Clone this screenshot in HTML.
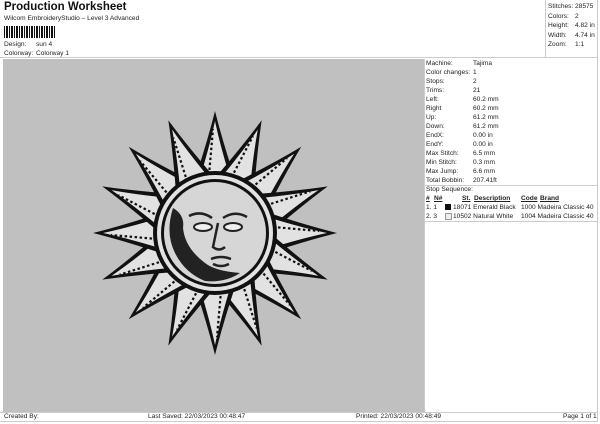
<!DOCTYPE html>
<html><head><style>
body{margin:0;width:600px;height:424px;background:#fff;font-family:"Liberation Sans",sans-serif;color:#222;position:relative;overflow:hidden;font-size:6.6px}
.a{position:absolute;white-space:nowrap}
</style></head><body>
<div class="a" style="left:4px;top:1px;font-size:11.5px;font-weight:bold;color:#111">Production Worksheet</div>
<div class="a" style="left:4px;top:15px">Wilcom EmbroideryStudio – Level 3 Advanced</div>
<div class="a" style="left:4px;top:26px;width:51px;height:12px;background:repeating-linear-gradient(90deg,#111 0 1px,#fff 1px 2px,#111 2px 4px,#fff 4px 5px)"></div>
<div class="a" style="left:4px;top:41px">Design:</div><div class="a" style="left:36px;top:41px">sun 4</div>
<div class="a" style="left:4px;top:50px">Colorway:</div><div class="a" style="left:36px;top:50px">Colorway 1</div>
<div class="a" style="left:0;top:0;width:598px;height:58px;border:1px solid #ccc;box-sizing:border-box;border-top:none;border-left:none"></div>
<div class="a" style="left:545px;top:0;width:1px;height:58px;background:#ccc"></div>
<div class="a" style="left:548px;top:2px;line-height:9.6px">Stitches:<br>Colors:<br>Height:<br>Width:<br>Zoom:</div>
<div class="a" style="left:575px;top:2px;line-height:9.6px">28575<br>2<br>4.82 in<br>4.74 in<br>1:1</div>
<div class="a" style="left:3px;top:59px;width:421px;height:353px;background:#c0c0c0"></div>
<svg class="a" style="left:3px;top:59px" width="421" height="353">
<g transform="translate(212,174)">
<g id="r">
<path d="M-22,-48 Q-8,-90 0,-122 Q8,-90 22,-48Z" fill="#111"/>
<path d="M-16,-52 Q-5,-88 0,-112 Q5,-88 16,-52Z" fill="#e2e2e2"/>
<path d="M-6,-58 L-2,-104" stroke="#111" stroke-width="2.2" stroke-dasharray="2.5,2.5"/>
</g>
<use href="#r" transform="rotate(22.5)"/><use href="#r" transform="rotate(45)"/><use href="#r" transform="rotate(67.5)"/>
<use href="#r" transform="rotate(90)"/><use href="#r" transform="rotate(112.5)"/><use href="#r" transform="rotate(135)"/>
<use href="#r" transform="rotate(157.5)"/><use href="#r" transform="rotate(180)"/><use href="#r" transform="rotate(202.5)"/>
<use href="#r" transform="rotate(225)"/><use href="#r" transform="rotate(247.5)"/><use href="#r" transform="rotate(270)"/>
<use href="#r" transform="rotate(292.5)"/><use href="#r" transform="rotate(315)"/><use href="#r" transform="rotate(337.5)"/>
<circle r="62" fill="#111"/><circle r="58" fill="#e2e2e2"/><circle r="54" fill="#111"/><circle r="51" fill="#d6d6d6"/>
<path d="M-42,-25 Q-50,0 -40,20 Q-30,40 -10,48 Q10,50 25,40 Q0,38 -10,30 Q-30,15 -32,-5 Q-30,-18 -42,-25Z" fill="#222"/>
<ellipse cx="-12" cy="-6" rx="9" ry="4" fill="#f0f0f0" stroke="#222" stroke-width="2"/>
<ellipse cx="18" cy="-6" rx="9" ry="4" fill="#f0f0f0" stroke="#222" stroke-width="2"/>
<path d="M-26,-17 Q-14,-23 -3,-15 M8,-15 Q20,-23 32,-16 M3,-10 L-2,14 Q4,19 10,14 M-4,26 Q6,22 16,26 M-2,31 Q6,35 14,31" stroke="#222" stroke-width="2.5" fill="none"/>
</g></svg>
<div class="a" style="left:424px;top:59px;width:1px;height:353px;background:#ccc"></div>
<div class="a" style="left:426px;top:59px;line-height:9px">Machine:<br>Color changes:<br>Stops:<br>Trims:<br>Left:<br>Right<br>Up:<br>Down:<br>EndX:<br>EndY:<br>Max Stitch:<br>Min Stitch:<br>Max Jump:<br>Total Bobbin:</div>
<div class="a" style="left:473px;top:59px;line-height:9px">Tajima<br>1<br>2<br>21<br>60.2 mm<br>60.2 mm<br>61.2 mm<br>61.2 mm<br>0.00 in<br>0.00 in<br>6.5 mm<br>0.3 mm<br>6.6 mm<br>207.41ft</div>
<div class="a" style="left:425px;top:185px;width:173px;height:1px;background:#ccc"></div>
<div class="a" style="left:426px;top:186px">Stop Sequence:</div>
<div class="a" style="left:426px;top:195px;text-decoration:underline;font-weight:bold">#</div>
<div class="a" style="left:434px;top:195px;text-decoration:underline;font-weight:bold">N#</div>
<div class="a" style="left:462px;top:195px;text-decoration:underline;font-weight:bold">St.</div>
<div class="a" style="left:474px;top:195px;text-decoration:underline;font-weight:bold">Description</div>
<div class="a" style="left:521px;top:195px;text-decoration:underline;font-weight:bold">Code</div>
<div class="a" style="left:540px;top:195px;text-decoration:underline;font-weight:bold">Brand</div>
<div class="a" style="left:426px;top:203px;line-height:9px">1. 1<br>2. 3</div>
<div class="a" style="left:445px;top:204px;width:6px;height:6px;background:#111"></div>
<div class="a" style="left:445px;top:213px;width:5px;height:5px;border:1px solid #999;background:#eee"></div>
<div class="a" style="left:453px;top:203px;line-height:9px">18071 Emerald Black<br>10502 Natural White</div>
<div class="a" style="left:521px;top:203px;line-height:9px">1000 Madeira Classic 40<br>1004 Madeira Classic 40</div>
<div class="a" style="left:425px;top:221px;width:173px;height:1px;background:#ccc"></div>
<div class="a" style="left:0;top:412px;width:598px;height:1px;background:#ccc"></div>
<div class="a" style="left:597px;top:58px;width:1px;height:364px;background:#ccc"></div>
<div class="a" style="left:0;top:421px;width:598px;height:1px;background:#ccc"></div>
<div class="a" style="left:4px;top:413px">Created By:</div>
<div class="a" style="left:148px;top:413px">Last Saved: 22/03/2023 00:48:47</div>
<div class="a" style="left:356px;top:413px">Printed: 22/03/2023 00:48:49</div>
<div class="a" style="left:563px;top:413px">Page 1 of 1</div>
</body></html>
